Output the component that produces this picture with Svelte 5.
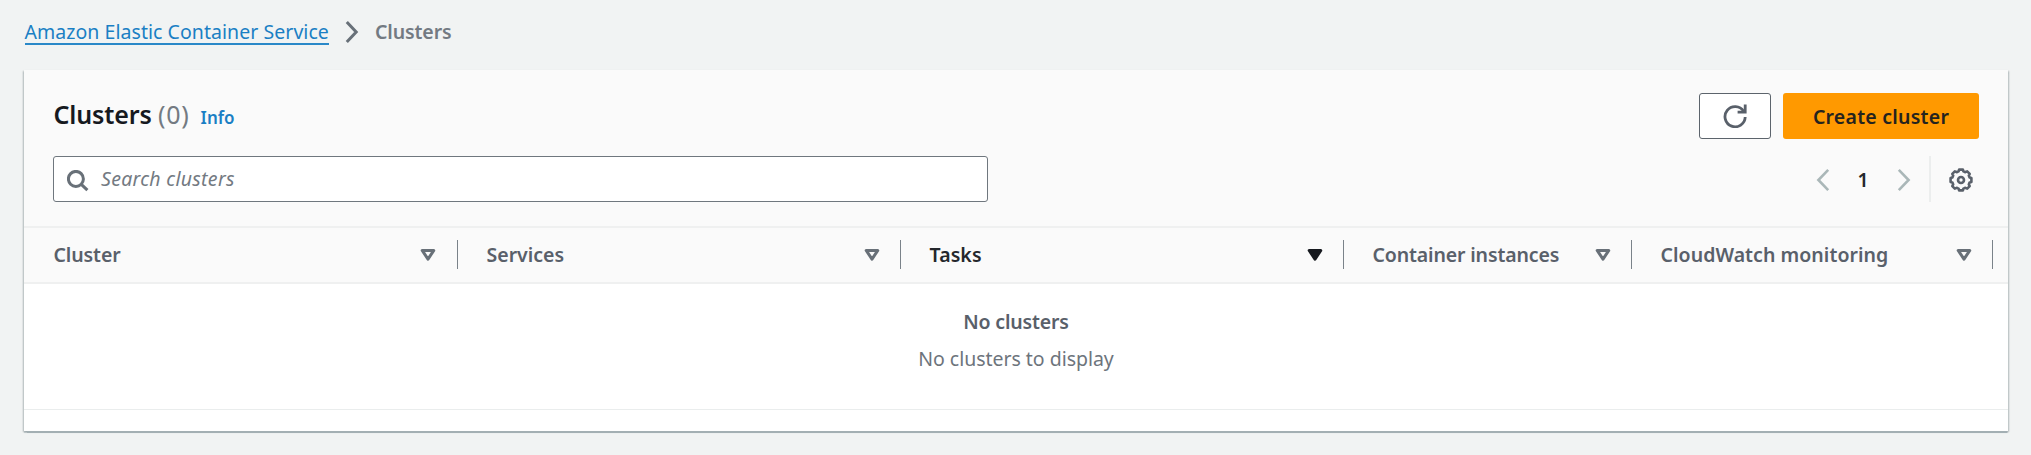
<script>
  const columns = [
    { label: 'Cluster', width: 433, gap: 21, spacing: -0.1 },
    { label: 'Services', width: 443, gap: 20, spacing: 0 },
    { label: 'Tasks', width: 443, gap: 20.5, spacing: 0.1, sorted: true },
    { label: 'Container instances', width: 288, gap: 20.5, spacing: -0.14 },
    { label: 'CloudWatch monitoring', width: 361, gap: 20, spacing: 0.05 }
  ];
</script>

<div class="page">
  <nav class="breadcrumbs" aria-label="Breadcrumbs">
    <a href="#ecs">Amazon Elastic Container Service</a>
    <svg class="crumb-arrow" width="14" height="24" viewBox="0 0 14 24"><path d="M1.8 2 L11.2 12 L1.8 22" /></svg>
    <span>Clusters</span>
  </nav>

  <section class="card">
    <header class="head">
      <div class="title-row">
        <h1>Clusters <span class="count">(0)</span></h1>
        <a class="info" href="#info">Info</a>
        <div class="actions">
          <button class="refresh" aria-label="Refresh">
            <svg width="24" height="24" viewBox="0 0 24 24">
              <path d="M22.2 13 A10.1 10.1 0 1 1 20.6 7.2" />
              <path d="M22.2 .6 V8.2 H14.6" />
            </svg>
          </button>
          <button class="create">Create cluster</button>
        </div>
      </div>
      <div class="tools">
        <div class="search">
          <svg width="22" height="22" viewBox="0 0 22 22"><circle cx="8.9" cy="8.9" r="7.5" /><path d="M14.3 14.3 L20.4 20.2" /></svg>
          <span>Search clusters</span>
        </div>
        <div class="pager">
          <svg width="14" height="24" viewBox="0 0 14 24"><path d="M12.2 1.8 L2.4 12 L12.2 22.2" /></svg>
          <span class="current">1</span>
          <svg width="14" height="24" viewBox="0 0 14 24"><path d="M1.8 1.8 L11.6 12 L1.8 22.2" /></svg>
        </div>
        <div class="settings">
          <svg width="24" height="24" viewBox="0 0 24 24">
            <path d="M9.6 3.4 L10.1 1.6 H13.9 L14.4 3.4 L16.4 4.2 L18.2 3.3 L20.7 5.8 L19.8 7.6 L20.6 9.6 L22.4 10.1 V13.9 L20.6 14.4 L19.8 16.4 L20.7 18.2 L18.2 20.7 L16.4 19.8 L14.4 20.6 L13.9 22.4 H10.1 L9.6 20.6 L7.6 19.8 L5.8 20.7 L3.3 18.2 L4.2 16.4 L3.4 14.4 L1.6 13.9 V10.1 L3.4 9.6 L4.2 7.6 L3.3 5.8 L5.8 3.3 L7.6 4.2 Z" />
            <circle cx="12" cy="12" r="3" />
          </svg>
        </div>
      </div>
    </header>

    <div class="columns">
      {#each columns as col}
        <div class="col" class:sorted={col.sorted} style="width: {col.width}px; padding-right: {col.gap}px">
          <span style="letter-spacing: {col.spacing}px">{col.label}</span>
          <svg width="16" height="14" viewBox="0 0 16 14"><path d="M2.2 2.4 H13.8 L8 11.2 Z" /></svg>
        </div>
      {/each}
    </div>

    <div class="empty">
      <strong>No clusters</strong>
      <p>No clusters to display</p>
    </div>
    <footer></footer>
  </section>
</div>

<style>
  :global(body) { margin: 0; background: #f1f3f3; }
  * { box-sizing: border-box; }
  .page {
    height: 455px;
    padding: 0 23px 0 24px;
    overflow: hidden;
    background: #f1f3f3;
    color: #59606a;
    font: 19.5px/30px "Noto Sans", sans-serif;
  }
  svg { display: block; flex: none; fill: none; stroke: #687078; stroke-width: 3; }
  a { color: #1a7fc4; text-decoration: none; }
  .breadcrumbs { display: flex; align-items: flex-start; height: 70px; padding-top: 17px; }
  .breadcrumbs a { height: 28px; margin-left: .5px; border-bottom: 2px solid #2a88c8; letter-spacing: .05px; }
  .breadcrumbs span { color: #737a82; font-weight: 600; letter-spacing: -.1px; }
  .crumb-arrow { margin: 3px 16px 0 16px; }
  .card { height: 361px; background: #fff; box-shadow: 0 1.5px 1px 0 #a3afb3, 1px 1px 1.5px 0 rgba(0, 28, 36, .25), -1px 1px 1.5px 0 rgba(0, 28, 36, .25); }
  .head { height: 158px; padding: 23px 29px 0; background: #fafafa; border-bottom: 2px solid #eff0f0; }
  .title-row { display: flex; height: 46px; }
  h1 { margin: 0 0 0 .5px; color: #16191f; font: 600 25px/38px "Noto Sans", sans-serif; padding-top: 2px; letter-spacing: -.15px; }
  .count { color: #737a82; font-weight: 400; letter-spacing: .8px; }
  .info { margin: 10px 0 0 11px; font-size: 17px; font-weight: 600; letter-spacing: 0; }
  .actions { display: flex; gap: 12px; margin-left: auto; }
  button { height: 46px; padding: 0; border-radius: 3px; font: inherit; }
  .refresh { width: 72px; display: flex; align-items: center; justify-content: center; background: #fff; border: 1px solid #5c646c; }
  .refresh svg { stroke: #59606a; stroke-width: 2.8; }
  .create { width: 196px; padding-top: 1px; border: 0; background: #ff9900; color: #24231f; font-weight: 600; letter-spacing: .24px; }
  .tools { display: flex; height: 46px; margin-top: 17px; align-items: center; }
  .search { width: 935px; height: 46px; display: flex; align-items: center; padding-left: 13px; background: #fff; border: 1px solid #6f777e; border-radius: 3px; }
  .search svg { margin: 3px 12px 0 0; }
  .search span { color: #737a82; font-style: italic; letter-spacing: .3px; }
  .pager { display: flex; align-items: center; margin-left: auto; padding-top: 2px; }
  .pager svg { stroke: #aab7b8; stroke-width: 2.6; }
  .current { width: 67px; padding-right: 1px; text-align: center; color: #24272c; font-weight: 600; }
  .settings { height: 46px; margin-left: 18px; padding: 12px 6px 0 18px; border-left: 2px solid #eceeee; }
  .settings svg { stroke: #59606a; stroke-width: 2.6; stroke-linejoin: round; }
  .columns { display: flex; height: 56px; background: #fafafa; border-bottom: 2px solid #eff0f0; }
  .col { flex: none; position: relative; display: flex; align-items: center; justify-content: space-between; padding-left: 29.5px; font-weight: 600; }
  .col svg { margin-bottom: 1px; stroke-linejoin: round; }
  .col::after { content: ""; position: absolute; right: -1px; top: 12px; width: 1.5px; height: 29px; background: #7a8289; }
  .sorted { color: #24272c; }
  .sorted path { fill: #16191f; stroke: #16191f; }
  .empty { height: 126px; padding-top: 23px; text-align: center; border-bottom: 1px solid #eaeded; }
  strong { display: block; font-weight: 600; letter-spacing: -.15px; }
  p { margin: 7px 0 0; color: #6d747c; letter-spacing: -.03px; }
</style>
